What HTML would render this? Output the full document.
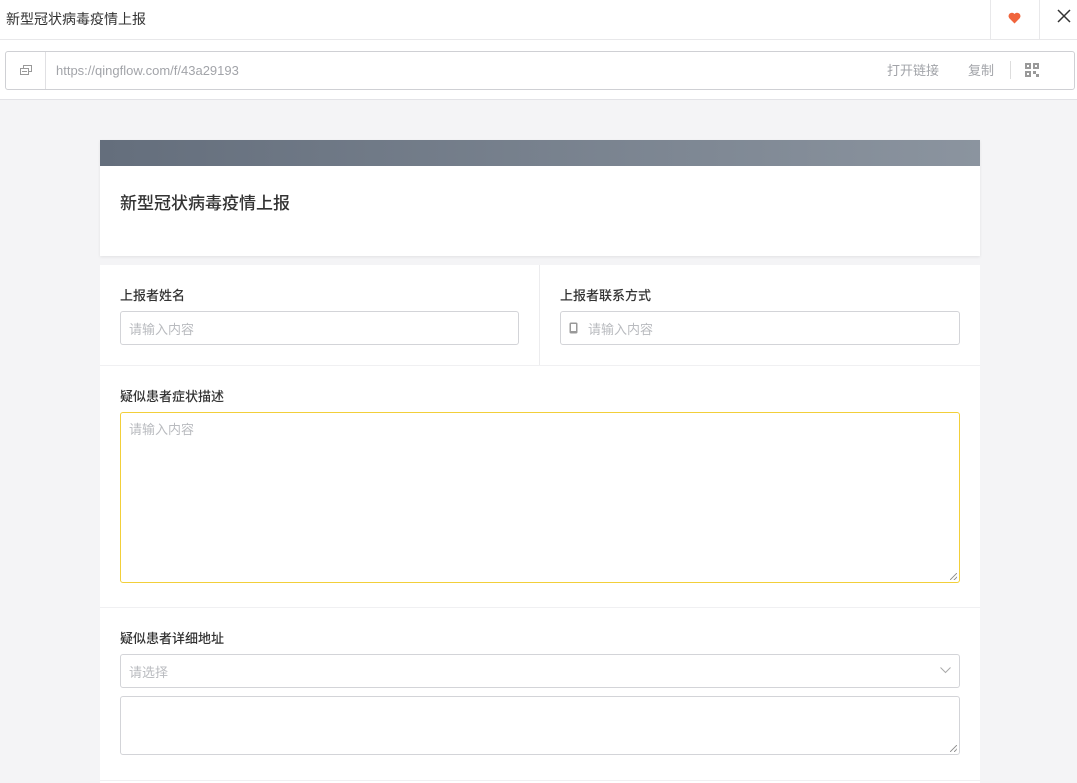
<!DOCTYPE html>
<html><head><meta charset="utf-8"><style>
*{box-sizing:border-box;margin:0;padding:0}
body{width:1077px;height:783px;overflow:hidden;background:#f4f4f6;font-family:"Liberation Sans","Noto Sans CJK SC",sans-serif;position:relative}
.top{position:absolute;left:0;top:0;width:1077px;height:100px;background:#fff;border-bottom:1px solid #e2e2e6}
.t{position:absolute;left:6px;top:9px;font-size:14px;color:#333}
.hl{position:absolute;top:39px;left:0;width:1077px;height:1px;background:#e8e8ea}
.vs{position:absolute;top:0;width:1px;height:39px;background:#e8e8ea}
.url{position:absolute;left:5px;top:51px;width:1070px;height:39px;border:1px solid #cfd0d4;border-radius:3px}
.url .ic{position:absolute;left:0;top:0;width:40px;height:37px;border-right:1px solid #e0e0e3}
.url span{position:absolute;top:0;line-height:37px;font-size:13px;color:#a2a4a9}
.card{position:absolute;left:100px;width:880px;background:#fff}
.lab{position:absolute;font-size:13px;color:#333;font-weight:500;line-height:16px}
.in{position:absolute;border:1px solid #d3d4d8;border-radius:3px;font-size:13px;color:#b9bbbf;padding:7px 8px}
.rz{position:absolute;right:2px;bottom:2px;width:7px;height:7px;background:linear-gradient(135deg,transparent 45%,#999 45%,#999 55%,transparent 55%,transparent 75%,#999 75%,#999 85%,transparent 85%)}
</style></head><body>
<div class="top">
<div class="t">新型冠状病毒疫情上报</div>
<div class="hl"></div>
<div class="vs" style="left:990px"></div><div class="vs" style="left:1039px"></div>
<svg style="position:absolute;left:1008px;top:12px" width="13" height="12" viewBox="0 0 13 12"><path d="M6.5 11.5L1.3 6.3A3 3 0 0 1 6.5 2a3 3 0 0 1 5.2 4.3z" fill="#f0643c"/></svg>
<svg style="position:absolute;left:1056px;top:8px" width="16" height="16" viewBox="0 0 16 16"><path d="M2 2L14 14M14 2L2 14" stroke="#333" stroke-width="1.5"/></svg>
<div class="url"><div class="ic"><svg style="position:absolute;left:14px;top:13px" width="12" height="11" viewBox="0 0 12 11"><rect x="3.5" y="0.5" width="8" height="6" fill="none" stroke="#999"/><rect x="0.5" y="3.5" width="8" height="6" fill="#fff" stroke="#999"/><line x1="2" y1="6.5" x2="7" y2="6.5" stroke="#999"/></svg></div>
<span style="left:50px">https://qingflow.com/f/43a29193</span>
<span style="left:881px">打开链接</span><span style="left:962px">复制</span>
<div style="position:absolute;left:1004px;top:9px;width:1px;height:18px;background:#ddd"></div>
<svg style="position:absolute;left:1019px;top:11px" width="14" height="14" viewBox="0 0 14 14" fill="#999"><rect x="0" y="0" width="6" height="6"/><rect x="8" y="0" width="6" height="6"/><rect x="0" y="8" width="6" height="6"/><rect x="8" y="8" width="3" height="3"/><rect x="11" y="11" width="3" height="3"/><rect x="2" y="2" width="2" height="2" fill="#fff"/><rect x="10" y="2" width="2" height="2" fill="#fff"/><rect x="2" y="10" width="2" height="2" fill="#fff"/></svg>
</div>
</div>
<div class="card" style="top:140px;height:116px;box-shadow:0 1px 3px rgba(0,0,0,.08)">
<div style="height:26px;background:linear-gradient(90deg,#646e7c,#8b949f)"></div>
<div style="position:absolute;left:20px;top:49px;font-size:17px;color:#333;font-weight:500">新型冠状病毒疫情上报</div>
</div>
<div class="card" style="top:265px;height:518px">
<div style="position:absolute;left:439px;top:0;width:1px;height:100px;background:#ececee"></div>
<div style="position:absolute;left:0;top:100px;width:880px;height:1px;background:#f0f0f2"></div>
<div class="lab" style="left:20px;top:23px">上报者姓名</div>
<div class="in" style="left:20px;top:46px;width:399px;height:34px">请输入内容</div>
<div class="lab" style="left:460px;top:23px">上报者联系方式</div>
<div class="in" style="left:460px;top:46px;width:400px;height:34px;padding-left:27px">请输入内容</div>
<svg style="position:absolute;left:469px;top:57px" width="9" height="12" viewBox="0 0 9 12"><rect x="0.5" y="0.5" width="8" height="11" rx="1.5" fill="#999"/><rect x="2" y="2" width="5" height="7" fill="#fff"/></svg>
<div class="lab" style="left:20px;top:124px">疑似患者症状描述</div>
<div class="in" style="left:20px;top:147px;width:840px;height:171px;border-color:#f2cf3a;padding-top:6px">请输入内容<div class="rz"></div></div>
<div style="position:absolute;left:0;top:342px;width:880px;height:1px;background:#f0f0f2"></div>
<div class="lab" style="left:20px;top:366px">疑似患者详细地址</div>
<div class="in" style="left:20px;top:389px;width:840px;height:34px">请选择</div>
<svg style="position:absolute;left:840px;top:402px" width="11" height="7" viewBox="0 0 11 7"><path d="M0.5 0.5L5.5 5.5L10.5 0.5" fill="none" stroke="#aaa"/></svg>
<div class="in" style="left:20px;top:431px;width:840px;height:59px"><div class="rz"></div></div>
<div style="position:absolute;left:0;top:515px;width:880px;height:1px;background:#f0f0f2"></div>
</div>
</body></html>
